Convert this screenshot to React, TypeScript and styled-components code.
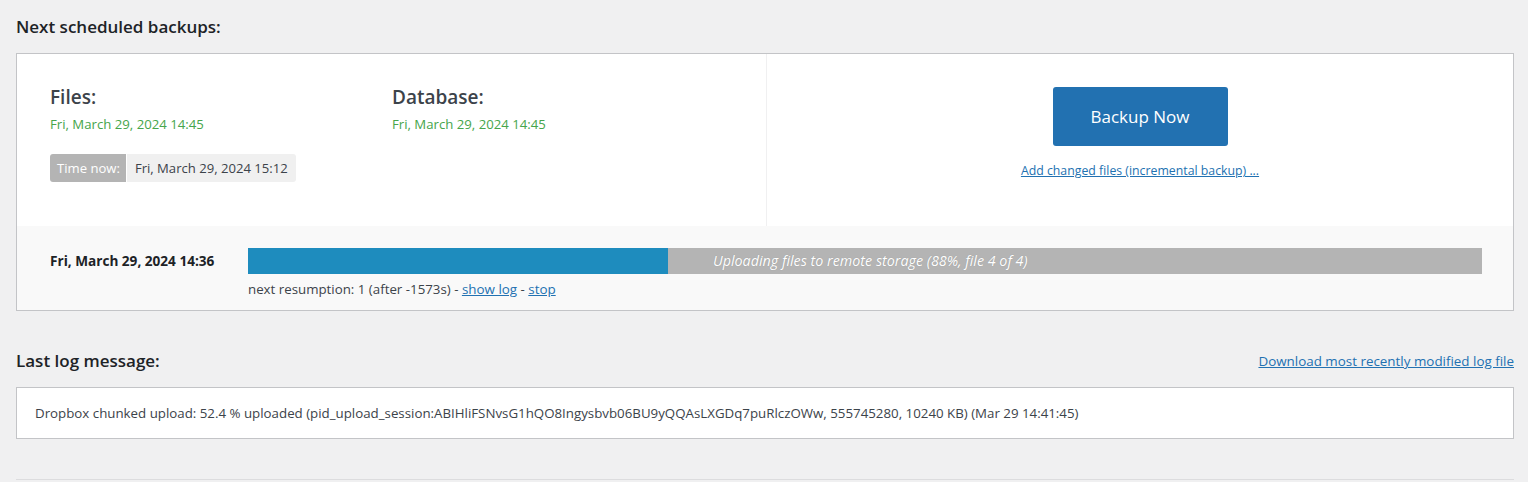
import styled, { createGlobalStyle } from 'styled-components';

const GlobalStyle = createGlobalStyle`
  html, body {
    margin: 0;
    padding: 0;
    background: #f0f0f1;
  }

  body {
    font-family: 'Open Sans', 'Noto Sans', sans-serif;
    color: #3c434a;
    font-size: 13px;
  }
`;

const Page = styled.div`
  padding: 0 14px 0 16px;
  width: 1498px;
`;

const SectionTitle = styled.h2`
  margin: 0;
  font-size: 17px;
  font-weight: 600;
  color: #1d2327;
  line-height: 22px;
`;

const TitleRow = styled.div<{ $top: number }>`
  display: flex;
  justify-content: space-between;
  align-items: center;
  padding-top: ${(p) => p.$top}px;
  height: 22px;
  margin-bottom: 15px;
`;

const Panel = styled.div`
  border: 1px solid #c3c4c7;
  background: #fff;
`;

const Upper = styled.div`
  display: grid;
  grid-template-columns: 750px 1fr;
  height: 172px;
`;

const Schedule = styled.div`
  display: flex;
  flex-direction: column;
  padding: 31px 33px 0;
  border-right: 1px solid #f0f0f1;
`;

const Columns = styled.div`
  display: grid;
  grid-template-columns: 342px 1fr;
`;

const Label = styled.h3`
  margin: 0;
  font-size: 19px;
  font-weight: 600;
  color: #3c434a;
  line-height: 24px;
`;

const NextDate = styled.div`
  color: #46a54b;
  font-size: 13.2px;
  line-height: 20px;
  margin-top: 5px;
`;

const TimeNow = styled.div`
  display: inline-flex;
  align-self: flex-start;
  margin-top: 20px;
  height: 28px;
  border-radius: 3px;
  overflow: hidden;
  font-size: 13.1px;
  line-height: 28px;
`;

const TimeLabel = styled.span`
  background: #b4b4b4;
  color: #fff;
  padding: 0 6px 0 7px;
  border-right: 1px solid #fff;
`;

const TimeValue = styled.span`
  background: #f0f0f0;
  color: #3c434a;
  padding: 0 8px;
`;

const Actions = styled.div`
  display: flex;
  flex-direction: column;
  align-items: center;
  padding-top: 33px;
`;

const BackupButton = styled.button`
  width: 175px;
  height: 59px;
  border: none;
  border-radius: 3px;
  background: #2271b1;
  color: #fff;
  font-family: inherit;
  font-size: 17px;
  cursor: pointer;
`;

const TextLink = styled.a<{ $size?: number }>`
  color: #2271b1;
  text-decoration: underline;
  font-size: ${(p) => p.$size ?? 13.4}px;
  cursor: pointer;
`;

const IncrementalLink = styled(TextLink)`
  margin-top: 16px;
`;

const Running = styled.div`
  background: #f9f9f9;
  height: 84px;
  display: grid;
  grid-template-columns: 198px 1fr;
  padding: 22px 31px 0 33px;
  box-sizing: border-box;
`;

const RunDate = styled.div`
  font-weight: 700;
  font-size: 13.6px;
  color: #1d2327;
  line-height: 26px;
`;

const ProgressTrack = styled.div`
  position: relative;
  height: 26px;
  background: #b4b4b4;
`;

const ProgressFill = styled.div`
  height: 100%;
  background: #1e8cbe;
`;

const ProgressText = styled.span`
  position: absolute;
  left: 465px;
  top: 0;
  line-height: 26px;
  font-size: 14.3px;
  color: #fff;
  font-style: italic;
  text-shadow: 0 0 1px rgba(0, 0, 0, 0.2);
`;

const Resumption = styled.div`
  margin-top: 5px;
  line-height: 20px;
  font-size: 13.3px;
  color: #3c434a;
`;

const LogBox = styled.div`
  border: 1px solid #c3c4c7;
  background: #fff;
  height: 50px;
  padding: 0 18px;
  display: flex;
  align-items: center;
  font-size: 13.3px;
  color: #3c434a;
`;

const Rule = styled.hr`
  margin: 40px 0 0;
  border: none;
  border-top: 1px solid #dcdcde;
`;

const progress = 34;

export default function App() {
  return (
    <>
      <GlobalStyle />
      <Page>
        <TitleRow $top={16}>
          <SectionTitle>Next scheduled backups:</SectionTitle>
        </TitleRow>
        <Panel>
          <Upper>
            <Schedule>
              <Columns>
                <div>
                  <Label>Files:</Label>
                  <NextDate>Fri, March 29, 2024 14:45</NextDate>
                </div>
                <div>
                  <Label>Database:</Label>
                  <NextDate>Fri, March 29, 2024 14:45</NextDate>
                </div>
              </Columns>
              <TimeNow>
                <TimeLabel>Time now:</TimeLabel>
                <TimeValue>Fri, March 29, 2024 15:12</TimeValue>
              </TimeNow>
            </Schedule>
            <Actions>
              <BackupButton>Backup Now</BackupButton>
              <IncrementalLink $size={12.3}>
                Add changed files (incremental backup) ...
              </IncrementalLink>
            </Actions>
          </Upper>
          <Running>
            <RunDate>Fri, March 29, 2024 14:36</RunDate>
            <div>
              <ProgressTrack>
                <ProgressFill style={{ width: `${progress}%` }} />
                <ProgressText>
                  Uploading files to remote storage (88%, file 4 of 4)
                </ProgressText>
              </ProgressTrack>
              <Resumption>
                next resumption: 1 (after -1573s) - <TextLink>show log</TextLink>{' '}
                - <TextLink>stop</TextLink>
              </Resumption>
            </div>
          </Running>
        </Panel>
        <TitleRow $top={39}>
          <SectionTitle>Last log message:</SectionTitle>
          <TextLink>Download most recently modified log file</TextLink>
        </TitleRow>
        <LogBox>
          Dropbox chunked upload: 52.4 % uploaded
          (pid_upload_session:ABIHliFSNvsG1hQO8Ingysbvb06BU9yQQAsLXGDq7puRlczOWw,
          555745280, 10240 KB) (Mar 29 14:41:45)
        </LogBox>
        <Rule />
      </Page>
    </>
  );
}
